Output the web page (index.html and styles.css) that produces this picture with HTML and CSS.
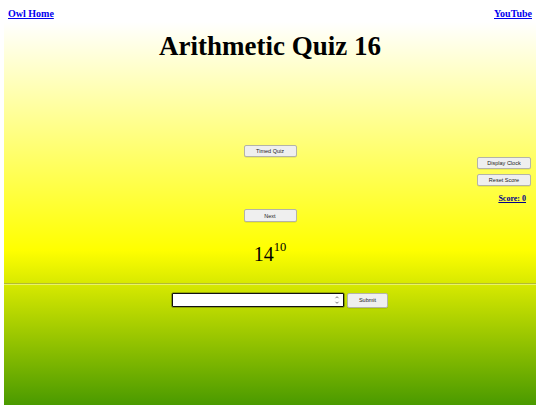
FILE: index.html
```html
<!DOCTYPE html>
<html lang="en">
<head>
<meta charset="utf-8">
<title>Arithmetic Quiz 16</title>
<link rel="stylesheet" href="styles.css">
</head>
<body>
<header class="topbar">
  <a class="toplink" href="#">Owl Home</a>
  <a class="toplink" href="#">YouTube</a>
</header>
<main class="quiz">
  <h1 class="title">Arithmetic Quiz 16</h1>
  <section class="stage">
    <div class="side"></div>
    <div class="center">
      <button class="btn btn-timed">Timed Quiz</button>
      <button class="btn btn-next">Next</button>
      <div class="problem">14<sup class="exp">10</sup></div>
    </div>
    <div class="side side-right">
      <button class="btn btn-clock">Display Clock</button>
      <button class="btn btn-reset">Reset Score</button>
      <a class="score" href="#">Score: 0</a>
    </div>
  </section>
  <hr class="divider">
  <section class="answer">
    <span class="field">
      <input class="answer-input" type="number">
      <svg class="spin" viewBox="0 0 6 12" width="6" height="12" aria-hidden="true">
        <path d="M1.5 4.2 L3 2.7 L4.5 4.2" fill="none" stroke="#555" stroke-width="0.8"/>
        <path d="M1.5 7.8 L3 9.3 L4.5 7.8" fill="none" stroke="#555" stroke-width="0.8"/>
      </svg>
    </span>
    <button class="btn btn-submit">Submit</button>
  </section>
</main>
</body>
</html>
```

FILE: styles.css
```css
html, body {
  margin: 0;
  padding: 0;
  height: 405px;
  overflow: hidden;
  background: #ffffff;
}

.topbar {
  display: flex;
  justify-content: space-between;
  padding: 8px 8px 0 8px;
  height: 12px;
}

.toplink {
  font-family: "Liberation Serif", "Times New Roman", serif;
  font-weight: bold;
  font-size: 10px;
  line-height: 12px;
  color: #0000ee;
  text-decoration: underline;
}

.quiz {
  margin: 2px 4px 0 4px;
  height: 383px;
  padding-top: 8px;
  box-sizing: border-box;
  background: linear-gradient(to bottom, #ffffff 0%, #ffff00 59.5%, #4a9a00 100%);
  overflow: hidden;
}

.title {
  margin: 0;
  text-align: center;
  font-family: "Liberation Serif", "Times New Roman", serif;
  font-weight: bold;
  font-size: 27px;
  line-height: 32px;
  color: #000;
}

.stage {
  display: grid;
  grid-template-columns: 1fr auto 1fr;
  margin-top: 78px;
}

.center {
  display: flex;
  flex-direction: column;
  align-items: center;
}

.side-right {
  display: flex;
  flex-direction: column;
  align-items: flex-end;
  padding-right: 5px;
}

.btn {
  font-family: "Liberation Sans", Arial, sans-serif;
  font-size: 5.5px;
  color: #222;
  background: #efefef;
  border: 1px solid #b4b4a8;
  border-radius: 2px;
  padding: 0;
  height: 12px;
  line-height: 10px;
  box-shadow: 0 0.5px 0.5px rgba(0,0,0,0.15);
}

.btn-timed, .btn-next {
  width: 53px;
}

.btn-timed { margin-top: 5px; }
.btn-next { margin-top: 52px; height: 13px; }

.problem {
  margin-top: 20px;
  font-family: "Liberation Serif", "Times New Roman", serif;
  font-size: 20px;
  line-height: 24px;
  color: #000;
}

.exp {
  font-size: 12.5px;
  line-height: 0;
  vertical-align: 10px;
}

.btn-clock, .btn-reset {
  width: 54px;
}

.btn-clock { margin-top: 17px; }
.btn-reset { margin-top: 5px; }

.score {
  margin-top: 8px;
  margin-right: 5px;
  font-family: "Liberation Serif", "Times New Roman", serif;
  font-weight: bold;
  font-size: 8px;
  line-height: 10px;
  color: #00008b;
  text-decoration: underline;
}

.divider {
  margin: 16.5px 0 0 0;
  height: 0;
  border: 0;
  border-top: 1px solid rgba(150, 150, 90, 0.55);
  border-bottom: 1px solid rgba(255, 255, 230, 0.45);
}

.answer {
  display: flex;
  justify-content: center;
  align-items: flex-start;
  gap: 3px;
  padding-left: 20px;
  margin-top: 8px;
}

.field {
  position: relative;
  display: block;
  width: 172px;
  height: 14px;
}

.answer-input {
  display: block;
  box-sizing: border-box;
  width: 172px;
  height: 14px;
  margin: 0;
  padding: 0 10px 0 2px;
  border: 1px solid #111;
  box-shadow: 0 0 0 0.6px rgba(0,0,0,0.5);
  border-radius: 1px;
  background: #fff;
  font-family: "Liberation Sans", Arial, sans-serif;
  font-size: 8px;
  -moz-appearance: textfield;
  appearance: textfield;
}

.answer-input::-webkit-inner-spin-button,
.answer-input::-webkit-outer-spin-button {
  -webkit-appearance: none;
  margin: 0;
}

.spin {
  position: absolute;
  right: 4px;
  top: 1px;
}

.btn-submit {
  width: 41px;
  height: 15px;
  line-height: 13px;
}
```
